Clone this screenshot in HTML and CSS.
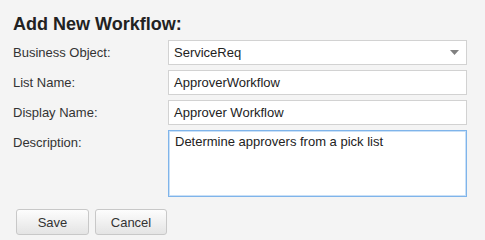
FILE: index.html
```html
<!DOCTYPE html>
<html>
<head>
<meta charset="utf-8">
<link rel="stylesheet" href="styles.css">
</head>
<body>
<div class="page">
  <h1 class="title">Add New Workflow:</h1>
  <div class="form">
    <label class="label">Business Object:</label>
    <div class="field select">
      <span class="select-text">ServiceReq</span>
      <svg class="arrow" width="9" height="5" viewBox="0 0 9 5"><path d="M0 0H9L4.5 5Z" fill="#808080"/></svg>
    </div>
    <label class="label">List Name:</label>
    <div class="field">ApproverWorkflow</div>
    <label class="label">Display Name:</label>
    <div class="field">Approver Workflow</div>
    <label class="label label-top">Description:</label>
    <div class="textarea">Determine approvers from a pick list</div>
  </div>
  <div class="buttons">
    <button class="btn btn-save">Save</button>
    <button class="btn btn-cancel">Cancel</button>
  </div>
</div>
</body>
</html>
```

FILE: styles.css
```css
html, body {
  margin: 0;
  padding: 0;
  background: #f4f4f4;
}
body {
  font-family: "Liberation Sans", Arial, sans-serif;
  font-size: 13px;
  color: #333;
}
.page {
  padding: 13px 0 0 13px;
}
.title {
  margin: 0;
  font-size: 18px;
  line-height: 22px;
  font-weight: bold;
  color: #222;
}
.form {
  margin-top: 5px;
  display: grid;
  grid-template-columns: 155px 299px;
  row-gap: 5px;
}
.label {
  line-height: 25px;
  height: 25px;
  color: #333;
}
.label-top {
  align-self: start;
}
.field {
  box-sizing: border-box;
  height: 25px;
  border: 1px solid #d2d2d2;
  background: #fff;
  padding: 0 5px;
  line-height: 23px;
  color: #222;
  display: flex;
  align-items: center;
}
.select {
  justify-content: space-between;
  padding-right: 7px;
}
.arrow {
  display: block;
}
.textarea {
  box-sizing: border-box;
  height: 67px;
  border: 1px solid #7fb4ea;
  box-shadow: inset 0 0 0 1px #c9e0f7;
  background: #fff;
  padding: 3px 6px;
  line-height: 15px;
  color: #222;
}
.buttons {
  display: flex;
  gap: 6px;
  margin-top: 12px;
  padding-left: 3px;
}
.btn {
  box-sizing: border-box;
  height: 26px;
  border: 1px solid #c8c8c8;
  border-radius: 3px;
  background: linear-gradient(#fdfdfd, #e4e4e4);
  font-family: "Liberation Sans", Arial, sans-serif;
  font-size: 13px;
  color: #333;
  padding: 0;
}
.btn-save {
  width: 73px;
}
.btn-cancel {
  width: 72px;
}
```
